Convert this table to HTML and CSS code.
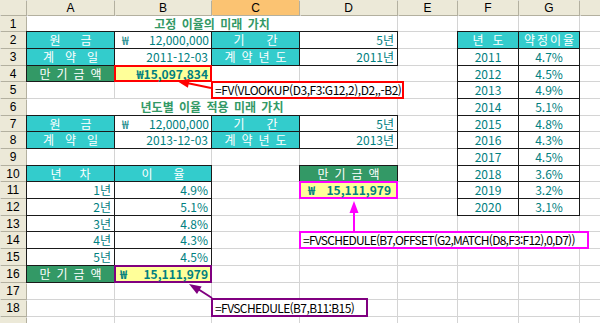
FILE: index.html
```html
<!DOCTYPE html>
<html lang="ko">
<head>
<meta charset="utf-8">
<title>미래 가치</title>
<link rel="stylesheet" href="styles.css">
</head>
<body>
<div class="sheet">
  <!-- column headers -->
  <div class="hd"></div><div class="hd">A</div><div class="hd">B</div><div class="hd sel">C</div><div class="hd">D</div><div class="hd">E</div><div class="hd">F</div><div class="hd">G</div><div class="hd"></div>

  <!-- row 1 -->
  <div class="hd">1</div>
  <div class="c title">고정 이율의 미래 가치</div>
  <div class="c"></div><div class="c"></div><div class="c"></div><div class="c"></div>

  <!-- row 2 -->
  <div class="hd">2</div>
  <div class="c cy ls20">원금</div>
  <div class="c bd acc"><span>₩</span><span>12,000,000</span></div>
  <div class="c cy ls22">기간</div>
  <div class="c bd r">5년</div>
  <div class="c"></div>
  <div class="c cy ls9">년도</div>
  <div class="c cy ls2">약정이율</div>
  <div class="c"></div>

  <!-- row 3 -->
  <div class="hd">3</div>
  <div class="c cy ls11">계약일</div>
  <div class="c bd r">2011-12-03</div>
  <div class="c cy ls6">계약년도</div>
  <div class="c bd r">2011년</div>
  <div class="c"></div>
  <div class="c bd ctr">2011</div>
  <div class="c bd ctr">4.7%</div>
  <div class="c"></div>

  <!-- row 4 -->
  <div class="hd">4</div>
  <div class="c gr ls6">만기금액</div>
  <div class="c yl red r">₩15,097,834</div>
  <div class="c"></div>
  <div class="c"></div>
  <div class="c"></div>
  <div class="c bd ctr">2012</div>
  <div class="c bd ctr">4.5%</div>
  <div class="c"></div>

  <!-- row 5 -->
  <div class="hd">5</div>
  <div class="c"></div><div class="c"></div><div class="c"></div><div class="c"></div><div class="c"></div>
  <div class="c bd ctr">2013</div>
  <div class="c bd ctr">4.9%</div>
  <div class="c"></div>

  <!-- row 6 -->
  <div class="hd">6</div>
  <div class="c title">년도별 이율 적용 미래 가치</div>
  <div class="c"></div>
  <div class="c bd ctr">2014</div>
  <div class="c bd ctr">5.1%</div>
  <div class="c"></div>

  <!-- row 7 -->
  <div class="hd">7</div>
  <div class="c cy ls20">원금</div>
  <div class="c bd acc"><span>₩</span><span>12,000,000</span></div>
  <div class="c cy ls22">기간</div>
  <div class="c bd r">5년</div>
  <div class="c"></div>
  <div class="c bd ctr">2015</div>
  <div class="c bd ctr">4.8%</div>
  <div class="c"></div>

  <!-- row 8 -->
  <div class="hd">8</div>
  <div class="c cy ls11">계약일</div>
  <div class="c bd r">2013-12-03</div>
  <div class="c cy ls6">계약년도</div>
  <div class="c bd r">2013년</div>
  <div class="c"></div>
  <div class="c bd ctr">2016</div>
  <div class="c bd ctr">4.3%</div>
  <div class="c"></div>

  <!-- row 9 -->
  <div class="hd">9</div>
  <div class="c"></div><div class="c"></div><div class="c"></div><div class="c"></div><div class="c"></div>
  <div class="c bd ctr">2017</div>
  <div class="c bd ctr">4.5%</div>
  <div class="c"></div>

  <!-- row 10 -->
  <div class="hd">10</div>
  <div class="c cy ls18">년차</div>
  <div class="c cy ls21">이율</div>
  <div class="c"></div>
  <div class="c gr ls6">만기금액</div>
  <div class="c"></div>
  <div class="c bd ctr">2018</div>
  <div class="c bd ctr">3.6%</div>
  <div class="c"></div>

  <!-- row 11 -->
  <div class="hd">11</div>
  <div class="c bd r">1년</div>
  <div class="c bd r">4.9%</div>
  <div class="c"></div>
  <div class="c yl mag acc accd"><span>₩</span><span>15,111,979</span></div>
  <div class="c"></div>
  <div class="c bd ctr">2019</div>
  <div class="c bd ctr">3.2%</div>
  <div class="c"></div>

  <!-- row 12 -->
  <div class="hd">12</div>
  <div class="c bd r">2년</div>
  <div class="c bd r">5.1%</div>
  <div class="c"></div><div class="c"></div><div class="c"></div>
  <div class="c bd ctr">2020</div>
  <div class="c bd ctr">3.1%</div>
  <div class="c"></div>

  <!-- row 13 -->
  <div class="hd">13</div>
  <div class="c bd r">3년</div>
  <div class="c bd r">4.8%</div>
  <div class="c"></div><div class="c"></div><div class="c"></div><div class="c"></div><div class="c"></div><div class="c"></div>

  <!-- row 14 -->
  <div class="hd">14</div>
  <div class="c bd r">4년</div>
  <div class="c bd r">4.3%</div>
  <div class="c"></div><div class="c"></div><div class="c"></div><div class="c"></div><div class="c"></div><div class="c"></div>

  <!-- row 15 -->
  <div class="hd">15</div>
  <div class="c bd r">5년</div>
  <div class="c bd r">4.5%</div>
  <div class="c"></div><div class="c"></div><div class="c"></div><div class="c"></div><div class="c"></div><div class="c"></div>

  <!-- row 16 -->
  <div class="hd">16</div>
  <div class="c gr ls6">만기금액</div>
  <div class="c yl pur acc accb"><span>₩</span><span>15,111,979</span></div>
  <div class="c"></div><div class="c"></div><div class="c"></div><div class="c"></div><div class="c"></div><div class="c"></div>

  <!-- row 17 -->
  <div class="hd">17</div>
  <div class="c"></div><div class="c"></div><div class="c"></div><div class="c"></div><div class="c"></div><div class="c"></div><div class="c"></div><div class="c"></div>

  <!-- row 18 -->
  <div class="hd">18</div>
  <div class="c"></div><div class="c"></div><div class="c"></div><div class="c"></div><div class="c"></div><div class="c"></div><div class="c"></div><div class="c"></div>

  <!-- row 19 (only a sliver visible) -->
  <div class="hd"></div>
  <div class="c"></div><div class="c"></div><div class="c"></div><div class="c"></div><div class="c"></div><div class="c"></div><div class="c"></div><div class="c"></div>

  <!-- overlays: arrows and formula callouts -->
  <svg class="arrows" width="600" height="323" viewBox="0 0 600 323">
    <line x1="211" y1="88" x2="187" y2="83" stroke="#ff0000" stroke-width="2"/>
    <polygon points="177,81 189.7,79 187.9,87.8" fill="#ff0000"/>
    <line x1="354" y1="232" x2="354" y2="210" stroke="#ff00ff" stroke-width="2"/>
    <polygon points="354,201 349.5,213 358.5,213" fill="#ff00ff"/>
    <line x1="212" y1="298" x2="198" y2="289" stroke="#800080" stroke-width="2"/>
    <polygon points="189,284 201.6,286.4 197,294.1" fill="#800080"/>
  </svg>
  <div class="note note-red">=FV(VLOOKUP(D3,F3:G12,2),D2,,-B2)</div>
  <div class="note note-mag">=FVSCHEDULE(B7,OFFSET(G2,MATCH(D8,F3:F12),0,D7))</div>
  <div class="note note-pur">=FVSCHEDULE(B7,B11:B15)</div>
</div>
</body>
</html>
```

FILE: styles.css
```css
html, body {
  margin: 0;
  padding: 0;
  background: #ffffff;
  overflow: hidden;
}

.sheet {
  position: relative;
  width: 600px;
  height: 323px;
  overflow: hidden;
  display: grid;
  grid-template-columns: 26px 87px 96px 87px 97px 59px 60px 60px 20px;
  grid-template-rows: 15px 15px 16px 16px 15px 16px 16px 15px 16px 16px 15px 16px 16px 15px 16px 16px 16px 16px 16px 16px;
  gap: 1px;
  background: #d4d4d4;
  font-family: "Noto Sans CJK KR", "Noto Sans", sans-serif;
  font-size: 12px;
}

.hd {
  background: #ece9d8;
  color: #000000;
  font-family: "Liberation Sans", Arial, sans-serif;
  font-size: 12px;
  display: flex;
  align-items: center;
  justify-content: center;
  box-shadow: 1px 1px 0 #b3b09f;
  line-height: 1;
}

.hd.sel {
  background: #fbc372;
}

.c {
  background: #ffffff;
  color: #008080;
  display: flex;
  align-items: center;
  padding: 0 3px;
  white-space: nowrap;
  line-height: 1;
  min-width: 0;
}

.r { justify-content: flex-end; }
.ctr { justify-content: center; }

.title {
  grid-column: span 4;
  justify-content: center;
  color: #339966;
  font-weight: bold;
  word-spacing: 2px;
}

.bd { box-shadow: 0 0 0 1px #1a1a1a; }

.cy {
  background: #33cccc;
  color: #ffffff;
  justify-content: center;
  box-shadow: 0 0 0 1px #1a1a1a;
}

.gr {
  background: #339966;
  color: #ffffff;
  justify-content: center;
  box-shadow: 0 0 0 1px #1a1a1a;
}

.ls2 { letter-spacing: 2px; padding: 0 0 0 2px; }
.ls6 { letter-spacing: 6px; padding: 0 0 0 6px; }
.ls9 { letter-spacing: 9px; padding: 0 0 0 9px; }
.ls11 { letter-spacing: 11px; padding: 0 0 0 11px; }
.ls18 { letter-spacing: 18px; padding: 0 0 0 18px; }
.ls20 { letter-spacing: 20px; padding: 0 0 0 20px; }
.ls21 { letter-spacing: 21px; padding: 0 0 0 21px; }
.ls22 { letter-spacing: 22px; padding: 0 0 0 22px; }

.acc {
  justify-content: space-between;
  padding: 0 2px 0 7px;
}
.accd { padding: 0 6px 0 8px; }
.accb { padding: 0 3px 0 5px; }

.yl {
  background: #ffff99;
  font-weight: bold;
}

.red { box-shadow: 0 0 0 1px #ff0000, inset 0 0 0 1px #ff0000; }
.mag { box-shadow: 0 0 0 1px #ff00ff, inset 0 0 0 1px #ff00ff; }
.pur { box-shadow: 0 0 0 1px #800080, inset 0 0 0 1px #800080; }

.arrows {
  position: absolute;
  left: 0;
  top: 0;
  pointer-events: none;
}

.note {
  position: absolute;
  box-sizing: border-box;
  background: #ffffff;
  color: #000000;
  font-family: "Noto Sans CJK KR", "Noto Sans", sans-serif;
  font-size: 12px;
  line-height: 1;
  display: flex;
  align-items: center;
  padding-left: 2px;
  white-space: nowrap;
  overflow: hidden;
}

.note-red {
  left: 211px;
  top: 81px;
  width: 193px;
  height: 18px;
  border: 2px solid #ff0000;
  letter-spacing: -0.45px;
}

.note-mag {
  left: 299px;
  top: 231px;
  width: 290px;
  height: 18px;
  border: 2px solid #ff00ff;
  letter-spacing: -0.75px;
}

.note-pur {
  left: 211px;
  top: 298px;
  width: 157px;
  height: 19px;
  border: 2px solid #800080;
  letter-spacing: -0.6px;
}
```
